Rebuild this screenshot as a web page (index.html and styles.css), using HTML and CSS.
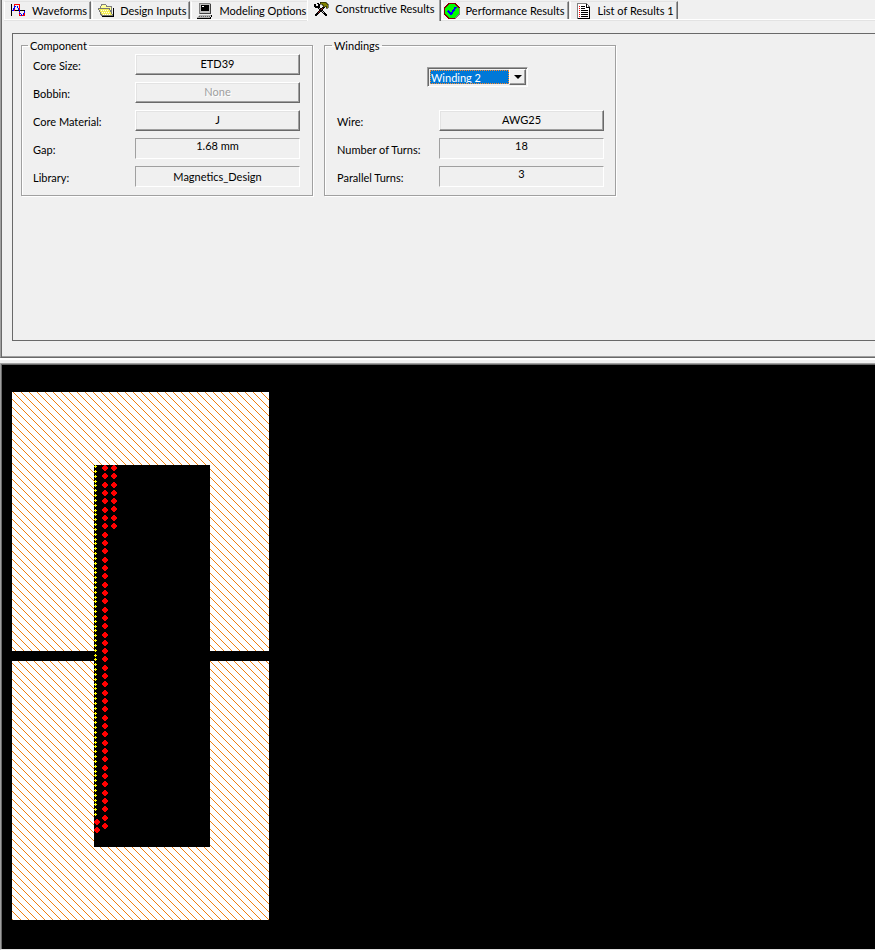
FILE: index.html
```html
<!DOCTYPE html>
<html lang="en">
<head>
<meta charset="utf-8">
<title>Magnetics Design</title>
<link rel="stylesheet" href="styles.css">
</head>
<body>
<main class="results">
  <div class="tabs" role="tablist">
    <button class="tab" role="tab" type="button">
      <svg class="icon" viewBox="0 0 16 16" aria-hidden="true"><path d="M1.500 1v12M1 7.500h14" stroke="#000" fill="none"/><path d="M4.500 8V1.500H9.500V12.500H14.500V8" stroke="#f00" fill="none"/><path d="M2 7h1v-2h1v-2h3v2h1v2h1v3h1v1h1v1h2v-2h1v-2h1" stroke="#00f" stroke-dasharray="2 1" fill="none"/></svg>
      <span>Waveforms</span>
    </button>
    <button class="tab" role="tab" type="button">
      <svg class="icon" viewBox="0 0 16 16" aria-hidden="true"><path d="M2.500 12V3.500L4 1.500H7.500L9 3.500H13.500V12" fill="#ffff9c" stroke="#808080"/><path d="M.5 5.500H11.500L14.500 12.500H3.500Z" fill="#f4ee58" stroke="#777"/><path d="M4 13.500H15.500V5" fill="none" stroke="#000"/><path d="M3 7.500h8M4 9.500h8M5 11.500h8" stroke="#fff" stroke-dasharray="1 1"/></svg>
      <span>Design Inputs</span>
    </button>
    <button class="tab before-active" role="tab" type="button">
      <svg class="icon" viewBox="0 0 16 16" aria-hidden="true"><path d="M2 0h12v11H2z" fill="#c0c0c0"/><path d="M2.500 11V.5H13" fill="none" stroke="#808080"/><path d="M4 2h8v6H4z" fill="#000"/><path d="M5 3h2v1H5z" fill="#fff"/><path d="M13 1h1v10H3v-1h10z" fill="#404040"/><path d="M2 12h12l-1 3H0z" fill="#b0b0b0"/><path d="M2 13.500h11" fill="none" stroke="#606060" stroke-dasharray="1 1"/><path d="M0 15.500h13l2-3" fill="none" stroke="#000"/></svg>
      <span>Modeling Options</span>
    </button>
    <button class="tab active" role="tab" type="button" aria-selected="true">
      <svg class="icon" viewBox="0 0 16 16" aria-hidden="true"><path d="M5 6L14 15" stroke="#000" stroke-width="2"/><path d="M6 7L13 14" stroke="#c0c0c0" stroke-dasharray="1 1"/><path d="M1 3v3h1v1h4V6h1V3H6V2H4v1h1v2H3V3z" fill="#000"/><path d="M11 6L2 15" stroke="#000" stroke-width="2"/><path d="M10 7L3 14" stroke="#a02020" stroke-dasharray="1 1"/><path d="M7 2V1h6v1h1v1h1v4h-2V5h-1v1h-2V4H9V3H7z" fill="#808000" stroke="#000" stroke-width=".5"/></svg>
      <span>Constructive Results</span>
    </button>
    <button class="tab" role="tab" type="button">
      <svg class="icon" viewBox="0 0 16 16" aria-hidden="true"><path d="M5 .5h6L15.500 5v6L11 15.500H5L.5 11V5z" fill="#0f0" stroke="#800000"/><path d="M11 15.500L15.500 11V5" fill="none" stroke="#808080"/><path d="M4 8l3 3L12 4" fill="none" stroke="#00f" stroke-width="2"/></svg>
      <span>Performance Results</span>
    </button>
    <button class="tab" role="tab" type="button">
      <svg class="icon" viewBox="0 0 16 16" aria-hidden="true"><path d="M1.500 .5h9L13.500 4v11.500H1.500z" fill="#fff" stroke="#808080"/><path d="M10.500 1v3.500H13.500V15.500H2" fill="none" stroke="#000"/><path d="M5 3.500h4M5 5.500h4M5 7.500h7M5 9.500h7M5 11.500h7M5 13.500h7" stroke="#000"/><path d="M3 3.500h1M3 5.500h1M3 7.500h1M3 9.500h1M3 11.500h1M3 13.500h1" stroke="#f00"/></svg>
      <span>List of Results 1</span>
    </button>
  </div>
  <section class="page">
    <div class="panel">
      <fieldset class="group">
        <legend>Component</legend>
        <div class="rows">
          <label for="core-size">Core Size:</label><button class="push" id="core-size" type="button">ETD39</button>
          <label for="bobbin">Bobbin:</label><button class="push" id="bobbin" type="button" disabled>None</button>
          <label for="material">Core Material:</label><button class="push" id="material" type="button">J</button>
          <label for="gap">Gap:</label><output class="field" id="gap">1.68 mm</output>
          <label for="library">Library:</label><output class="field centered" id="library">Magnetics_Design</output>
        </div>
      </fieldset>
      <fieldset class="group">
        <legend>Windings</legend>
        <div class="combo">
          <select aria-label="Winding"><option>Winding 1</option><option selected>Winding 2</option></select>
          <span class="arrow" aria-hidden="true"></span>
        </div>
        <div class="rows">
          <label for="wire">Wire:</label><button class="push" id="wire" type="button">AWG25</button>
          <label for="turns">Number of Turns:</label><output class="field" id="turns">18</output>
          <label for="parallel">Parallel Turns:</label><output class="field" id="parallel">3</output>
        </div>
      </fieldset>
    </div>
  </section>
</main>
<section class="view">
  <svg class="core" width="257" height="528" viewBox="0 0 257 528" shape-rendering="crispEdges" role="img" aria-label="Core cross section">
    <defs>
      <pattern id="hatch" width="8" height="8" patternUnits="userSpaceOnUse">
        <path fill="#f08010" d="M1 0h1v1h-1zM2 1h1v1h-1zM3 2h1v1h-1zM4 3h1v1h-1zM5 4h1v1h-1zM6 5h1v1h-1zM7 6h1v1h-1zM0 7h1v1h-1z"/>
      </pattern>
      <path id="thick" fill="#f00" d="M-1-3h2v1h1v1h1v2h-1v1h-1v1h-2v-1h-1v-1h-1v-2h1v-1h1z"/>
      <path id="thin" fill="#ff0" d="M0-1h1v1h1v1h-1v1h-1v-1h-1v-1h1z"/>
    </defs>
    <path fill="#fff" d="M0 0h257v528H0z"/>
    <path fill="url(#hatch)" d="M0 0h257v528H0z"/>
    <path d="M82 73h116v382H82zM0 259h257v10H0z"/>
    <g id="wires"></g>
  </svg>
</section>
<script src="wires.js"></script>
</body>
</html>
```
FILE: styles.css
```css
* { box-sizing: border-box; }

body {
  margin: 0;
  min-height: 100vh;
  display: flex;
  flex-direction: column;
  background: #f0f0f0;
  color: #000;
  font: 11px/14px Lato, "Liberation Sans", sans-serif;
  overflow-x: hidden;
}

button, select { font: inherit; color: inherit; }

.results {
  border-left: 1px solid #a0a0a0;
  border-bottom: 1px solid #696969;
  box-shadow: inset 1px 0 #696969, inset 0 -1px #a0a0a0, 0 2px #fff;
  padding: 0 0 1px 3px;
}

.tabs {
  display: flex;
  height: 20px;
  padding-top: 1px;
  border-bottom: 1px solid #fff;
  box-shadow: 0 1px #e3e3e3;
}

.tab {
  display: flex;
  align-items: center;
  gap: 6px;
  margin: 0 1px 0 0;
  padding: 0 3px 0 5px;
  border: 0;
  border-top: 1px solid #e3e3e3;
  border-left: 1px solid #fff;
  border-right: 1px solid #696969;
  box-shadow: inset -1px 0 #a0a0a0;
  background: #f0f0f0;
  white-space: nowrap;
}

.tab.before-active {
  margin-right: 0;
  padding-right: 1px;
  border-right: 0;
  box-shadow: none;
}

.tab.active {
  position: relative;
  margin-top: -1px;
  margin-bottom: -2px;
  padding: 0 5px 4px;
  border-top: 0;
}

.tab.active + .tab { padding-left: 1px; }

.icon { width: 16px; height: 16px; flex: none; shape-rendering: crispEdges; }

.page { padding: 13px 0 15px 8px; }

.panel {
  display: flex;
  align-items: flex-start;
  gap: 11px;
  height: 308px;
  padding: 6px 8px;
  border: 1px solid #696969;
  border-right: 0;
}

.group {
  flex: 0 0 292px;
  min-width: 0;
  height: 156px;
  margin: 0;
  padding: 3px 12px 8px 11px;
  border: 1px solid #a0a0a0;
  box-shadow: 1px 1px #fff, inset 1px 1px #fff;
  display: flex;
  flex-direction: column;
  justify-content: space-between;
}

.group + .group { padding-right: 11px; padding-left: 12px; }

legend { margin-left: -5px; padding: 0 2px; line-height: 11px; }

.rows {
  display: grid;
  grid-template-columns: 1fr 165px;
  grid-auto-rows: 21px;
  row-gap: 7px;
}

.rows label { padding-top: 5px; }

.push {
  padding: 0 0 1px;
  border: 1px solid;
  border-color: #fff #696969 #696969 #fff;
  background: #f0f0f0;
  box-shadow: inset -1px -1px #a0a0a0, inset 1px 1px #e3e3e3;
}

.push:disabled { color: #a0a0a0; text-shadow: 1px 1px #fff; }

.field {
  padding-top: 0;
  border: 1px solid;
  border-color: #a0a0a0 #fff #fff #a0a0a0;
  text-align: center;
}

.field.centered { padding-top: 3px; }

.combo {
  display: flex;
  width: 101px;
  height: 20px;
  margin: 13px 0 0 90px;
  padding: 1px;
  border: 1px solid;
  border-color: #a0a0a0 #fff #fff #a0a0a0;
  box-shadow: inset 1px 1px #696969;
}

.combo select {
  flex: 1;
  min-width: 0;
  margin: 1px 0 1px 1px;
  padding: 0;
  border: 1px dotted #ff8728;
  border-radius: 0;
  appearance: none;
  background: #0078d7;
  color: #fff;
  line-height: 13px;
}

.arrow {
  width: 17px;
  display: grid;
  place-items: center;
  border: 1px solid;
  border-color: #fff #696969 #696969 #fff;
  box-shadow: inset -1px -1px #a0a0a0;
}

.arrow::before {
  content: "";
  border: 4px solid transparent;
  border-top-color: #000;
  border-bottom: 0;
}

.view {
  flex: 1;
  margin-top: 5px;
  padding: 28px 11px;
  border: 1px solid #a0a0a0;
  border-right: 0;
  border-bottom-color: #e3e3e3;
  box-shadow: inset 1px 1px #696969;
  background: #000;
}

.core { display: block; }
```
FILE: wires.js
```javascript
const wires = document.getElementById("wires");

function column(shape, x, first, last, count) {
  for (let i = 0; i < count; i++) {
    const use = document.createElementNS("http://www.w3.org/2000/svg", "use");
    use.setAttribute("href", "#" + shape);
    use.setAttribute("x", x);
    use.setAttribute("y", Math.round(first + (last - first) * i / (count - 1)));
    wires.append(use);
  }
}

column("thin", 83, 74, 422, 73);
column("thick", 85, 430, 438, 2);
column("thick", 93, 76, 434, 44);
column("thick", 102, 76, 134, 8);
```
